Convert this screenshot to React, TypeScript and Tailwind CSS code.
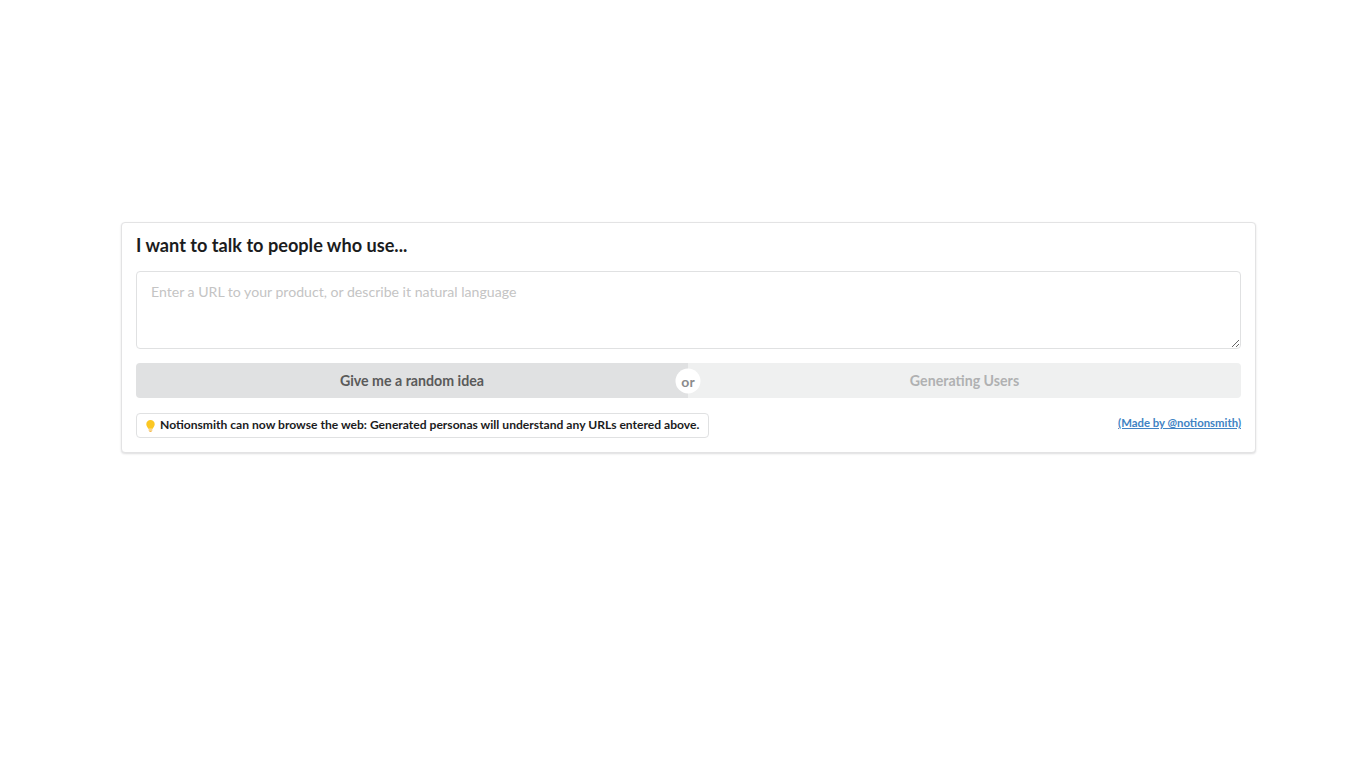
export default function App() {
  return (
    <div className="min-h-[764px] bg-white pt-[222px] pl-[121px] font-['Lato',sans-serif]">
      <div className="w-[1135px] h-[231px] rounded-[4px] border border-[#e3e3e4] bg-white px-[14px] pt-[9px] shadow-[0_1px_2px_rgba(34,36,38,0.15)]">
        <h3 className="text-[18.150px] leading-[26px] font-bold text-[#1b1c1d]">I want to talk to people who use...</h3>
        <textarea
          className="mt-[13px] block w-full h-[78px] rounded-[4px] border border-[#e0e1e2] px-[14px] py-[10px] text-[14.100px] leading-[20px] text-[#1b1c1d] outline-none placeholder:text-[#c4c4c4]"
          placeholder="Enter a URL to your product, or describe it natural language"
        />
        <div className="relative mt-[14px] flex h-[35px] text-[14.200px] font-bold">
          <button className="w-[552px] rounded-l-[4px] bg-[#e0e1e2] text-[#5a5a5a]">Give me a random idea</button>
          <button className="flex-1 rounded-r-[4px] bg-[#eff0f0] text-[#b0b1b2]">Generating Users</button>
          <div className="absolute left-[552px] top-1/2 flex size-[25px] -translate-x-1/2 -translate-y-1/2 items-center justify-center rounded-full bg-white text-[14px] text-[#8a8b8c]">or</div>
        </div>
        <div className="mt-[15px] flex items-start justify-between">
          <div className="flex h-[25px] items-center rounded-[4px] border border-[#e0e1e2] pl-[8px] pr-[9px] text-[12.100px] font-bold text-[#1b1c1d]">
            <svg width="11" height="14" viewBox="0 0 12 14" className="mr-[4px]">
              <path d="M6 .5a4.600 4.600 0 0 0-4.600 4.600c0 2.300 1.700 3.200 2.100 5h5c.4-1.800 2.100-2.700 2.100-5A4.600 4.600 0 0 0 6 .5z" fill="#fbc723" />
              <path d="M4 10.800h4v1.200H4zM4.800 12.600h2.400V13.500H4.800z" fill="#f2a71b" />
            </svg>
            Notionsmith can now browse the web: Generated personas will understand any URLs entered above.
          </div>
          <a href="#" className="mt-[2px] text-[11.350px] leading-[15px] font-bold text-[#4183c4] underline">(Made by @notionsmith)</a>
        </div>
      </div>
    </div>
  );
}
